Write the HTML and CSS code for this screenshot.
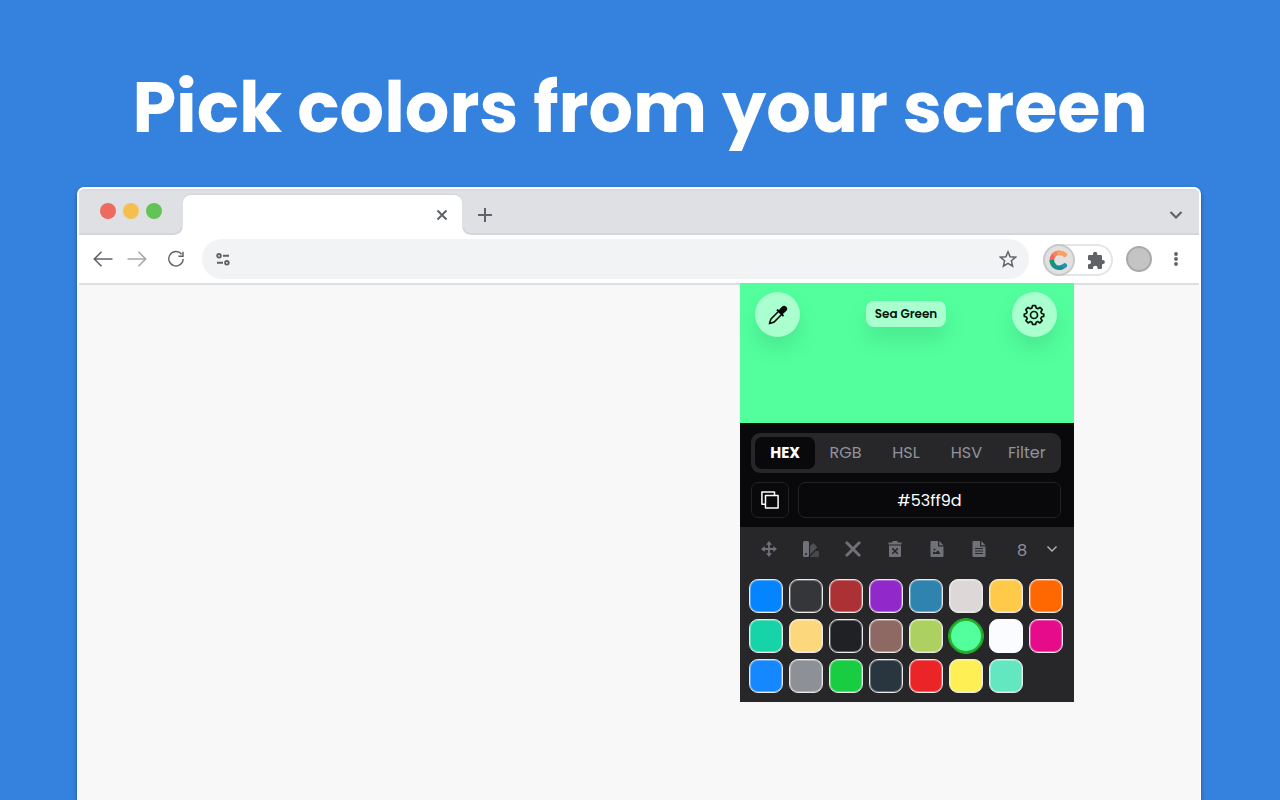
FILE: index.html
```html
<!DOCTYPE html>
<html lang="en">
<head>
<meta charset="utf-8">
<meta name="viewport" content="width=device-width, initial-scale=1">
<title>Color picker</title>
<link rel="stylesheet" href="styles.css">
</head>
<body>
<h1 class="headline">Pick colors from your screen</h1>
<main class="window">
  <div class="tabstrip">
    <div class="lights"><span class="light red"></span><span class="light amber"></span><span class="light green"></span></div>
    <div class="tab">
      <button class="plain" aria-label="Close tab"><svg width="12" height="12" viewBox="0 0 12 12"><path d="M1.500 1.500l9 9M10.500 1.500l-9 9" fill="none" stroke="#5f6368" stroke-width="2"/></svg></button>
    </div>
    <button class="plain newtab" aria-label="New tab"><svg width="14" height="14" viewBox="0 0 14 14"><path d="M7 0v14M0 7h14" fill="none" stroke="#5f6368" stroke-width="2"/></svg></button>
    <button class="plain tabsearch" aria-label="Search tabs"><svg width="14" height="10" viewBox="0 0 14 10"><path d="M1.500 2L7 7.500 12.500 2" fill="none" stroke="#5f6368" stroke-width="2.200"/></svg></button>
  </div>
  <nav class="navbar" aria-label="Browser">
    <button class="plain back" aria-label="Back"><svg width="20" height="16" viewBox="0 0 20 16"><path d="M19.500 8H1.500M8.500 .8L1.300 8l7.200 7.200" fill="none" stroke="#5f6368" stroke-width="1.600"/></svg></button>
    <button class="plain forward" aria-label="Forward"><svg width="20" height="16" viewBox="0 0 20 16"><path d="M.5 8h18M11.500 .8L18.700 8l-7.200 7.200" fill="none" stroke="#a5a7aa" stroke-width="1.600"/></svg></button>
    <button class="plain reload" aria-label="Reload"><svg width="18" height="18" viewBox="0 0 18 18"><path d="M14.600 4.200A7.200 7.200 0 1 0 16.200 9" fill="none" stroke="#5f6368" stroke-width="1.400"/><path d="M16 1.800v4.500h-4.500" fill="none" stroke="#5f6368" stroke-width="1.500"/></svg></button>
    <div class="omnibox">
      <svg width="14" height="14" viewBox="0 0 14 14" fill="none" stroke="#5f6368" stroke-width="1.900"><circle cx="3" cy="3.800" r="1.800"/><circle cx="10.900" cy="10.800" r="1.800"/><path d="M7 3.800h6M1 10.800h6"/></svg>
      <input class="address" type="text" aria-label="Address">
      <button class="plain" aria-label="Bookmark"><svg width="18" height="18" viewBox="0 0 18 18"><path d="M9 1.800l2.100 4.900 5.400.5-4.100 3.600 1.200 5.300L9 13.300l-4.600 2.800 1.200-5.300L1.500 7.200l5.400-.5z" fill="none" stroke="#5f6368" stroke-width="1.500"/></svg></button>
    </div>
    <div class="extensions">
      <button class="plain picker" aria-label="Color picker extension"><svg width="20" height="20" viewBox="0 0 20 20" fill="none" stroke-width="4.600"><path d="M2.800 10.500A7.500 7.500 0 0 1 5 5" stroke="#f2685f"/><path d="M4.400 5.500A7.500 7.500 0 0 1 10.500 2.800" stroke="#fa7f5a"/><path d="M10 2.800a7.500 7.500 0 0 1 5.800 2" stroke="#fba05f" stroke-linecap="round"/><path d="M15.800 15.500A7.500 7.500 0 0 1 12 17.400" stroke="#268fb4" stroke-linecap="round"/><path d="M13.500 17A7.500 7.500 0 0 1 4.600 15.200" stroke="#168d91"/><path d="M5.500 16A7.500 7.500 0 0 1 2.800 10" stroke="#1b927a"/></svg></button>
      <button class="plain puzzle" aria-label="Extensions"><svg width="18" height="18" viewBox="0 0 18 18"><path d="M1 5.200Q1 4 2.200 4H6V3a2 2 0 0 1 4.300 0v1h3.500Q15 4 15 5.200V9h.8a2 2 0 0 1 0 4.200H15v3.600Q15 18 13.800 18h-3.200v-1a2.300 2.300 0 0 0-4.600 0v1H2.200Q1 18 1 16.800v-3.500h.9a2.200 2.200 0 0 0 0-4.400H1z" fill="#5f6368"/></svg></button>
    </div>
    <button class="avatar" aria-label="Profile"></button>
    <button class="plain more" aria-label="Menu"><svg width="6" height="14" viewBox="0 0 6 14" fill="#5f6368"><circle cx="3" cy="2" r="1.900"/><circle cx="3" cy="7" r="1.900"/><circle cx="3" cy="12" r="1.900"/></svg></button>
  </nav>
  <div class="content">
    <section class="popup" aria-label="Color picker">
      <header class="preview">
        <button class="round" aria-label="Pick a color"><svg width="20" height="20" viewBox="0 0 20 20"><path d="M10.200 6.800L3 14Q2.100 15.800 1.600 18.400q2.800-.5 4.500-1.400l7.200-7.200" fill="none" stroke="#050806" stroke-width="1.600"/><path d="M8.300 5.200l1.300-1.300 1.300 1.200 3-3.300a2.700 2.700 0 0 1 4.300 4.300l-3.300 3 1.200 1.300-1.300 1.300z" fill="#050806"/></svg></button>
        <span class="name">Sea Green</span>
        <button class="round" aria-label="Settings"><svg width="22" height="22" viewBox="0 0 22 22" fill="none" stroke="#06150c" stroke-width="1.700"><circle cx="11" cy="11" r="3.500"/><path stroke-linejoin="round" d="M9.500 1.600h3l.7 2.400 1.600.7 2.200-1.300 2.200 2.200L17.900 8l.7 1.500 2.100.5v2.400l-2.200.6-.7 1.500 1.300 2.100-2.200 2.300-2.200-1.300-1.500.7-.6 2.100h-3l-.7-2.100-1.500-.7-2.200 1.300-2.300-2.300 1.300-2.100-.7-1.500-2.200-.6V10l2.100-.5L4.100 8 2.800 5.700l2.300-2.300 2.200 1.300L8.900 4z"/></svg></button>
      </header>
      <div class="values">
        <div class="formats">
          <button class="format active" aria-pressed="true">HEX</button>
          <button class="format">RGB</button>
          <button class="format">HSL</button>
          <button class="format">HSV</button>
          <button class="format">Filter</button>
        </div>
        <div class="code">
          <button class="copy" aria-label="Copy"><svg width="18" height="18" viewBox="0 0 18 18" fill="none" stroke="#fff" stroke-width="1.500" stroke-linejoin="round"><path d="M4.500 13.200H.9V.9h12.600v3"/><path d="M4.500 4.500h12.600v12.600H4.500z"/></svg></button>
          <input class="hex" type="text" value="#53ff9d" aria-label="Color value">
        </div>
      </div>
      <div class="palette">
        <div class="tools">
          <button class="plain tool" aria-label="Move"><svg width="16" height="16" viewBox="0 0 16 16"><path d="M8 2v12M2 8h12" stroke="#71717a" stroke-width="1.800"/><path d="M8 0l3 3.700H5zM8 16l3-3.700H5zM0 8l3.700-3v6zM16 8l-3.700-3v6z" fill="#71717a"/></svg></button>
          <button class="plain tool" aria-label="Swatches"><svg width="16" height="16" viewBox="0 0 16 16"><path d="M6.500 16l6-6H15q1 0 1 1v4q0 1-1 1z" fill="#47474d"/><path d="M7 13.500V5l2.500-2.300q.8-.7 1.500.1l2.700 2.700q.7.8 0 1.500z" fill="#505057"/><rect width="6" height="16" rx="1.500" fill="#71717a"/><circle cx="3" cy="13" r="1.100" fill="#27272a"/></svg></button>
          <button class="plain tool" aria-label="Remove"><svg width="16" height="16" viewBox="0 0 16 16"><path d="M1.800 1.800l12.400 12.400M14.200 1.800L1.800 14.200" stroke="#71717a" stroke-width="2.800" stroke-linecap="round"/></svg></button>
          <button class="plain tool" aria-label="Delete all"><svg width="16" height="16" viewBox="0 0 16 16"><path d="M5.500 0h5v1.500h4v2h-13v-2h4zM2 4.500h12V15q0 1-1 1H3q-1 0-1-1z" fill="#71717a"/><path d="M5.300 7.400l5.400 5.400M10.700 7.400l-5.400 5.400" stroke="#27272a" stroke-width="1.500"/></svg></button>
          <button class="plain tool" aria-label="Save as image"><svg width="16" height="16" viewBox="0 0 16 16"><path d="M2.500 0H9v5.500h5.500V15q0 1-1 1h-11q-1 0-1-1V1q0-1 1-1zM10.200 0l4.300 4.300h-4.300z" fill="#71717a"/><path d="M4 13v-2.500l2.500 1L9 9.300l2.500 3.700z" fill="#27272a"/><circle cx="5.500" cy="8.500" r="1" fill="#27272a"/></svg></button>
          <button class="plain tool" aria-label="Save as text"><svg width="16" height="16" viewBox="0 0 16 16"><path d="M2.500 0H9v5.500h5.500V15q0 1-1 1h-11q-1 0-1-1V1q0-1 1-1zM10.200 0l4.300 4.300h-4.300z" fill="#71717a"/><path d="M4 7.500h8M4 10h8M4 12.500h8" stroke="#27272a"/></svg></button>
          <label class="columns">
            <select class="count" aria-label="Columns"><option>8</option></select>
            <svg width="12" height="8" viewBox="0 0 12 8"><path d="M1.500 1.500L6 6l4.500-4.500" fill="none" stroke="#b4b4bb" stroke-width="1.400"/></svg>
          </label>
        </div>
        <div class="swatches">
          <button class="swatch azure" aria-label="Azure"></button>
          <button class="swatch graphite" aria-label="Graphite"></button>
          <button class="swatch brick" aria-label="Brick"></button>
          <button class="swatch violet" aria-label="Violet"></button>
          <button class="swatch steel" aria-label="Steel blue"></button>
          <button class="swatch mist" aria-label="Mist"></button>
          <button class="swatch gold" aria-label="Gold"></button>
          <button class="swatch orange" aria-label="Orange"></button>
          <button class="swatch teal" aria-label="Teal"></button>
          <button class="swatch sand" aria-label="Sand"></button>
          <button class="swatch ink" aria-label="Ink"></button>
          <button class="swatch mocha" aria-label="Mocha"></button>
          <button class="swatch lime" aria-label="Lime"></button>
          <button class="swatch seagreen selected" aria-label="Sea Green"></button>
          <button class="swatch white" aria-label="White"></button>
          <button class="swatch magenta" aria-label="Magenta"></button>
          <button class="swatch blue" aria-label="Blue"></button>
          <button class="swatch gray" aria-label="Gray"></button>
          <button class="swatch emerald" aria-label="Emerald"></button>
          <button class="swatch slate" aria-label="Slate"></button>
          <button class="swatch scarlet" aria-label="Scarlet"></button>
          <button class="swatch lemon" aria-label="Lemon"></button>
          <button class="swatch mint" aria-label="Mint"></button>
        </div>
      </div>
    </section>
  </div>
</main>
</body>
</html>
```
FILE: styles.css
```css
* { box-sizing: border-box; }

body {
  display: flex;
  flex-direction: column;
  min-height: 100vh;
  margin: 0;
  background: #3482de;
  font-family: Poppins, Inter, "Open Sans", sans-serif;
}

svg { display: block; flex: none; }

button, input, select { margin: 0; font: inherit; }

.plain {
  display: flex;
  align-items: center;
  justify-content: center;
  padding: 0;
  border: 0;
  background: none;
}

.headline {
  margin: 0;
  padding: 60px 16px 31px;
  color: #fff;
  font-size: 70px;
  font-weight: 700;
  line-height: 96px;
  text-align: center;
}

.window {
  display: flex;
  flex: 1;
  flex-direction: column;
  margin: 0 79px 0 77px;
  border: 2px solid #fff;
  border-bottom: 0;
  border-radius: 7px 7px 0 0;
  background: #fff;
  box-shadow: 0 2px 4px rgba(0, 0, 0, .35);
}

.tabstrip {
  display: flex;
  align-items: center;
  height: 46px;
  border-top: 2px solid #d9dbe0;
  border-bottom: 2px solid #d3d6dc;
  border-radius: 5px 5px 0 0;
  background: #dee0e4;
}

.lights { display: flex; gap: 7px; padding: 0 21px 2px; }
.light { width: 16px; height: 16px; border-radius: 50%; }
.red { background: #ee6a5f; }
.amber { background: #f5bf4f; }
.green { background: #61c454; }

.tab {
  position: relative;
  display: flex;
  flex: 0 1 279px;
  align-self: flex-end;
  justify-content: flex-end;
  height: 40px;
  margin-bottom: -2px;
  padding-right: 14px;
  border-radius: 8px 8px 0 0;
  background: #fff;
  box-shadow: 0 -1px 1px #d0d3da;
}

/* concave feet where the tab meets the toolbar */
.tab::before, .tab::after {
  content: "";
  position: absolute;
  bottom: 0;
  width: 8px;
  height: 8px;
}
.tab::before {
  right: 100%;
  background: radial-gradient(circle at 0 0, #dee0e4 5px, #d3d6dc 6px, #d3d6dc 7px, #fff 8px);
}
.tab::after {
  left: 100%;
  background: radial-gradient(circle at 100% 0, #dee0e4 5px, #d3d6dc 6px, #d3d6dc 7px, #fff 8px);
}

.newtab { margin: 5px 0 0 16px; }
.tabsearch { margin: 5px 16px 0 auto; }

.navbar {
  display: flex;
  align-items: center;
  height: 50px;
  padding-left: 14px;
  border-bottom: 2px solid #dcdee1;
}

.back { margin-right: 14px; }
.forward { margin-right: 20px; }
.reload { margin-right: 17px; }

.omnibox {
  display: flex;
  flex: 1;
  align-items: center;
  height: 40px;
  padding: 0 12px 0 14px;
  border-radius: 20px;
  background: #f1f3f4;
}

.address { flex: 1; min-width: 0; border: 0; background: none; outline: 0; }

.extensions {
  display: flex;
  align-items: center;
  height: 32px;
  margin: 2px 13px 0 14px;
  border: 2px solid #e5e5e6;
  border-left: 0;
  border-radius: 16px;
}

.picker {
  width: 32px;
  height: 32px;
  border: 2px solid #c9c9c9;
  border-radius: 50%;
  background: #e1e1e1;
}

.puzzle { margin: 0 6px 0 12px; }

.avatar {
  width: 26px;
  height: 26px;
  padding: 0;
  border: 2px solid #a9a9a9;
  border-radius: 50%;
  background: #c4c4c4;
}

.more { margin: 0 20px 0 21px; }

.content {
  display: flex;
  flex: 1;
  align-items: flex-start;
  justify-content: flex-end;
  margin: 0 -1px 0 -2px;
  padding-right: 126px;
  background: #f8f8f8;
}

.popup {
  width: 334px;
  margin-top: -2px;
}

.preview {
  display: flex;
  align-items: flex-start;
  justify-content: space-between;
  height: 140px;
  padding: 9px 17px 0 15px;
  background: #53ff9d;
}

.round {
  display: flex;
  align-items: center;
  justify-content: center;
  width: 45px;
  height: 45px;
  padding: 0;
  border: 0;
  border-radius: 50%;
  background: #a9ffce;
  box-shadow: 0 12px 20px rgba(30, 120, 70, .16);
}

.name {
  margin-top: 9px;
  padding: 0 9px;
  border-radius: 8px;
  background: #a9ffce;
  box-shadow: 0 12px 20px rgba(30, 120, 70, .16);
  color: #05150b;
  font-size: 12px;
  font-weight: 600;
  line-height: 26px;
}

.values {
  padding: 10px 13px 9px 11px;
  background: #09090b;
}

.formats {
  display: grid;
  grid-template-columns: repeat(5, 1fr);
  padding: 4px;
  border-radius: 9px;
  background: #27272a;
}

.format {
  height: 32px;
  padding: 0 0 2px;
  border: 0;
  border-radius: 7px;
  background: none;
  color: #92929c;
  font-size: 16px;
}

.active { background: #09090b; color: #fff; font-size: 15px; font-weight: 700; }

.code { display: flex; gap: 9px; margin-top: 9px; }

.copy {
  display: flex;
  align-items: center;
  justify-content: center;
  width: 38px;
  height: 36px;
  padding: 0;
  border: 1px solid #222225;
  border-radius: 7px;
  background: none;
}

.hex {
  flex: 1;
  min-width: 0;
  height: 36px;
  padding: 0;
  border: 1px solid #222225;
  border-radius: 7px;
  background: none;
  color: #fff;
  font-size: 16px;
  text-align: center;
}

.palette {
  padding: 10px 11px 9px 9px;
  background: #27272a;
}

.tools {
  display: flex;
  gap: 26px;
  align-items: center;
  height: 24px;
  padding: 0 5px 0 12px;
}

.columns {
  display: flex;
  flex: 1;
  align-items: center;
  justify-content: flex-end;
  gap: 17px;
}

.count {
  width: 12px;
  padding: 4px 0 0;
  border: 0;
  background: none;
  color: #92929c;
  font-size: 16px;
  line-height: 24px;
  appearance: none;
}

.swatches {
  display: grid;
  grid-template-columns: repeat(8, 34px);
  gap: 6px;
  margin-top: 18px;
}

.swatch {
  height: 34px;
  padding: 0;
  border: 1px solid #eaeaea;
  border-radius: 9px;
  box-shadow: inset 0 0 0 1px rgba(255, 255, 255, .3);
}

.selected {
  border: 2px solid #25b52e;
  border-radius: 50%;
  outline: 1px solid #25b52e;
  box-shadow: none;
}

.azure { background: #0584ff; }
.graphite { background: #35363a; }
.brick { background: #ab3134; }
.violet { background: #9128c9; }
.steel { background: #2f83af; }
.mist { background: #ddd7d7; }
.gold { background: #ffc94a; }
.orange { background: #ff6700; }
.teal { background: #17d4a8; }
.sand { background: #fdd77b; }
.ink { background: #202124; }
.mocha { background: #8e6963; }
.lime { background: #add161; }
.seagreen { background: #53ff9d; }
.white { background: #fbfcff; border-color: #fff; }
.magenta { background: #e50b8b; }
.blue { background: #1688ff; }
.gray { background: #8e9098; }
.emerald { background: #19cd43; }
.slate { background: #2a363f; }
.scarlet { background: #eb2427; }
.lemon { background: #fdef54; }
.mint { background: #62e7c0; }
```
